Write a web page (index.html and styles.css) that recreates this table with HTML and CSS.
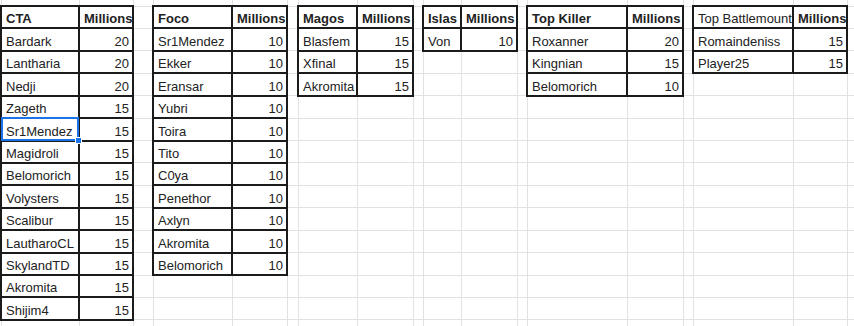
FILE: index.html
```html
<!DOCTYPE html>
<html lang="en">
<head>
    <meta charset="UTF-8">
    <meta name="viewport" content="width=device-width, initial-scale=1.0">
    <title>Millions</title>
    <link rel="stylesheet" href="styles.css">
</head>
<body>
    <div class="pane">
    <!-- Spreadsheet grid: columns A..R -->
    <table class="sheet">
        <colgroup>
            <col class="w78"><col class="w54"><col class="w20">
            <col class="w79"><col class="w55"><col class="w11">
            <col class="w59"><col class="w56"><col class="w10">
            <col class="w38"><col class="w56"><col class="w10">
            <col class="w100"><col class="w56"><col class="w10">
            <col class="w100"><col class="w54"><col class="w60">
        </colgroup>
        <tr class="edge"><td></td><td></td><td></td><td></td><td></td><td></td><td></td><td></td><td></td><td></td><td></td><td></td><td></td><td></td><td></td><td></td><td></td><td></td></tr>

        <!-- Headers -->
        <tr class="row">
            <td class="b h">CTA</td><td class="b h">Millions</td><td></td>
            <td class="b h">Foco</td><td class="b h">Millions</td><td></td>
            <td class="b h">Magos</td><td class="b h">Millions</td><td></td>
            <td class="b h">Islas</td><td class="b h">Millions</td><td></td>
            <td class="b h">Top Killer</td><td class="b h">Millions</td><td></td>
            <td class="b">Top Battlemount</td><td class="b h">Millions</td><td></td>
        </tr>
        <tr class="row">
            <td class="b">Bardark</td><td class="b n">20</td><td></td>
            <td class="b">Sr1Mendez</td><td class="b n">10</td><td></td>
            <td class="b">Blasfem</td><td class="b n">15</td><td></td>
            <td class="b">Von</td><td class="b n">10</td><td></td>
            <td class="b">Roxanner</td><td class="b n">20</td><td></td>
            <td class="b">Romaindeniss</td><td class="b n">15</td><td></td>
        </tr>
        <tr class="row">
            <td class="b">Lantharia</td><td class="b n">20</td><td></td>
            <td class="b">Ekker</td><td class="b n">10</td><td></td>
            <td class="b">Xfinal</td><td class="b n">15</td><td></td>
            <td></td><td></td><td></td>
            <td class="b">Kingnian</td><td class="b n">15</td><td></td>
            <td class="b">Player25</td><td class="b n">15</td><td></td>
        </tr>
        <tr class="row">
            <td class="b">Nedji</td><td class="b n">20</td><td></td>
            <td class="b">Eransar</td><td class="b n">10</td><td></td>
            <td class="b">Akromita</td><td class="b n">15</td><td></td>
            <td></td><td></td><td></td>
            <td class="b">Belomorich</td><td class="b n">10</td><td></td>
            <td></td><td></td><td></td>
        </tr>
        <tr class="row">
            <td class="b">Zageth</td><td class="b n">15</td><td></td>
            <td class="b">Yubri</td><td class="b n">10</td><td></td>
            <td></td><td></td><td></td><td></td><td></td><td></td><td></td><td></td><td></td><td></td><td></td><td></td>
        </tr>
        <tr class="row">
            <td class="b sel">Sr1Mendez<span class="cursor"><span class="handle"></span></span></td><td class="b n">15</td><td></td>
            <td class="b">Toira</td><td class="b n">10</td><td></td>
            <td></td><td></td><td></td><td></td><td></td><td></td><td></td><td></td><td></td><td></td><td></td><td></td>
        </tr>
        <tr class="row">
            <td class="b">Magidroli</td><td class="b n">15</td><td></td>
            <td class="b">Tito</td><td class="b n">10</td><td></td>
            <td></td><td></td><td></td><td></td><td></td><td></td><td></td><td></td><td></td><td></td><td></td><td></td>
        </tr>
        <tr class="row">
            <td class="b">Belomorich</td><td class="b n">15</td><td></td>
            <td class="b">C0ya</td><td class="b n">10</td><td></td>
            <td></td><td></td><td></td><td></td><td></td><td></td><td></td><td></td><td></td><td></td><td></td><td></td>
        </tr>
        <tr class="row">
            <td class="b">Volysters</td><td class="b n">15</td><td></td>
            <td class="b">Penethor</td><td class="b n">10</td><td></td>
            <td></td><td></td><td></td><td></td><td></td><td></td><td></td><td></td><td></td><td></td><td></td><td></td>
        </tr>
        <tr class="row">
            <td class="b">Scalibur</td><td class="b n">15</td><td></td>
            <td class="b">Axlyn</td><td class="b n">10</td><td></td>
            <td></td><td></td><td></td><td></td><td></td><td></td><td></td><td></td><td></td><td></td><td></td><td></td>
        </tr>
        <tr class="row">
            <td class="b">LautharoCL</td><td class="b n">15</td><td></td>
            <td class="b">Akromita</td><td class="b n">10</td><td></td>
            <td></td><td></td><td></td><td></td><td></td><td></td><td></td><td></td><td></td><td></td><td></td><td></td>
        </tr>
        <tr class="row">
            <td class="b">SkylandTD</td><td class="b n">15</td><td></td>
            <td class="b">Belomorich</td><td class="b n">10</td><td></td>
            <td></td><td></td><td></td><td></td><td></td><td></td><td></td><td></td><td></td><td></td><td></td><td></td>
        </tr>
        <tr class="row">
            <td class="b">Akromita</td><td class="b n">15</td><td></td>
            <td></td><td></td><td></td><td></td><td></td><td></td><td></td><td></td><td></td><td></td><td></td><td></td><td></td><td></td><td></td>
        </tr>
        <tr class="row">
            <td class="b">Shijim4</td><td class="b n">15</td><td></td>
            <td></td><td></td><td></td><td></td><td></td><td></td><td></td><td></td><td></td><td></td><td></td><td></td><td></td><td></td><td></td>
        </tr>
        <tr class="row"><td></td><td></td><td></td><td></td><td></td><td></td><td></td><td></td><td></td><td></td><td></td><td></td><td></td><td></td><td></td><td></td><td></td><td></td></tr>
    </table>
    </div>
</body>
</html>
```

FILE: styles.css
```css
html, body {
    margin: 0;
    overflow: hidden;
    background: #ffffff;
}

body {
    font-family: 'Liberation Sans', Arial, sans-serif;
    font-size: 13px;
    color: #222222;
}

/* Visible part of the sheet */
.pane {
    width: 854px;
    height: 326px;
    overflow: hidden;
}

/* Sheet grid */
.sheet {
    border-collapse: collapse;
    table-layout: fixed;
    width: 906px;
}

.sheet td {
    border: 1px solid #e2e2e2;
    padding: 0 3px 1px 4px;
    vertical-align: bottom;
    white-space: nowrap;
    overflow: hidden;
    line-height: 15px;
}

.sheet .edge {
    height: 6px;
}

.sheet .edge td {
    border-top: 0;
    padding: 0;
    line-height: 0;
}

.sheet .row {
    height: 22.43px;
}

/* Framed cells (the small tables) */
.sheet td.b {
    border: 2px solid #1b1b1b;
}

.sheet td.h {
    font-weight: bold;
}

.sheet td.n {
    text-align: right;
}

/* Selected cell */
.sheet td.sel {
    position: relative;
    overflow: visible;
}

.cursor {
    position: absolute;
    top: -2px;
    left: -1px;
    right: -1px;
    bottom: -1px;
    border: 2px solid #1a73e8;
}

.handle {
    position: absolute;
    right: -5px;
    bottom: -5px;
    width: 5px;
    height: 5px;
    background: #1a73e8;
    border: 1px solid #ffffff;
}

col.w10 { width: 10px; }
col.w11 { width: 11px; }
col.w20 { width: 20px; }
col.w38 { width: 38px; }
col.w54 { width: 54px; }
col.w55 { width: 55px; }
col.w56 { width: 56px; }
col.w59 { width: 59px; }
col.w60 { width: 60px; }
col.w78 { width: 78px; }
col.w79 { width: 79px; }
col.w100 { width: 100px; }
```
